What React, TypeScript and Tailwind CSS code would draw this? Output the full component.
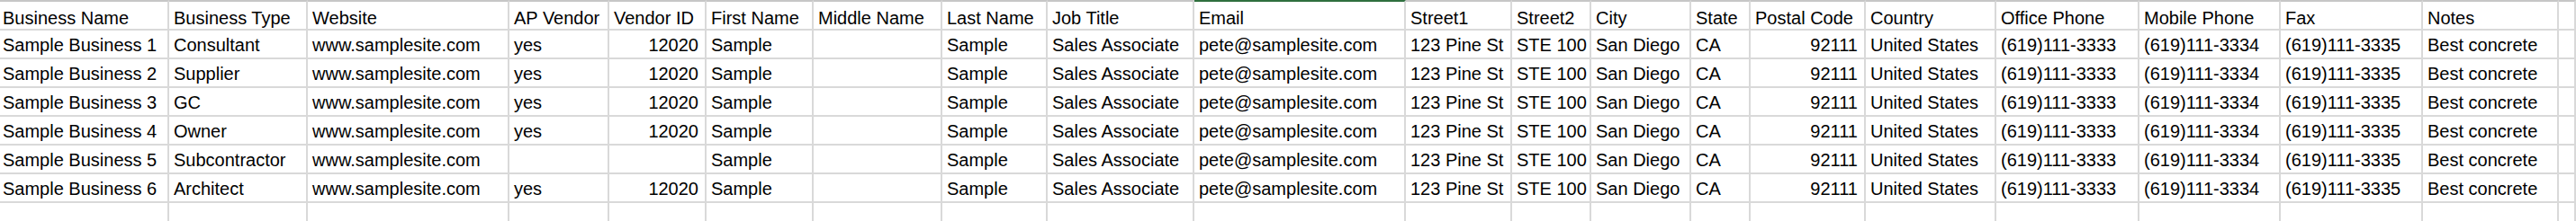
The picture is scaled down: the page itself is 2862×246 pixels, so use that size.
import React from 'react';

type Col = { title: string; key: string; right?: boolean };

const columns: Col[] = [
  { title: 'Business Name', key: 'name' },
  { title: 'Business Type', key: 'type' },
  { title: 'Website', key: 'web' },
  { title: 'AP Vendor', key: 'ap' },
  { title: 'Vendor ID', key: 'vid', right: true },
  { title: 'First Name', key: 'first' },
  { title: 'Middle Name', key: 'middle' },
  { title: 'Last Name', key: 'last' },
  { title: 'Job Title', key: 'job' },
  { title: 'Email', key: 'email' },
  { title: 'Street1', key: 'st1' },
  { title: 'Street2', key: 'st2' },
  { title: 'City', key: 'city' },
  { title: 'State', key: 'state' },
  { title: 'Postal Code', key: 'zip', right: true },
  { title: 'Country', key: 'country' },
  { title: 'Office Phone', key: 'office' },
  { title: 'Mobile Phone', key: 'mobile' },
  { title: 'Fax', key: 'fax' },
  { title: 'Notes', key: 'notes' },
  { title: '', key: 'extra' },
];

const types = ['Consultant', 'Supplier', 'GC', 'Owner', 'Subcontractor', 'Architect'];

const rows: Record<string, string>[] = types.map((type, i) => ({
  name: `Sample Business ${i + 1}`,
  type,
  web: 'www.samplesite.com',
  ap: i === 4 ? '' : 'yes',
  vid: i === 4 ? '' : '12020',
  first: 'Sample',
  middle: '',
  last: 'Sample',
  job: 'Sales Associate',
  email: 'pete@samplesite.com',
  st1: '123 Pine St',
  st2: 'STE 100',
  city: 'San Diego',
  state: 'CA',
  zip: '92111',
  country: 'United States',
  office: '(619)111-3333',
  mobile: '(619)111-3334',
  fax: '(619)111-3335',
  notes: 'Best concrete',
  extra: '',
}));

function Cell({ text, right, header, email, first }: { text: string; right?: boolean; header?: boolean; email?: boolean; first?: boolean }) {
  return (
    <div
      className={`h-[32px] border-r-2 border-b-2 border-[#d9d9d9] overflow-hidden whitespace-nowrap pt-[3px] leading-[27px] ${
        right ? 'text-right pr-[7px]' : first ? 'pl-[3px]' : 'pl-[5px]'
      } ${header ? (email ? 'border-t-2 border-t-[#2f6f3e] h-[34px] pt-[5px]' : 'border-t-2 border-t-[#c6c6c6] h-[34px] pt-[5px]') : ''}`}
    >
      {text}
    </div>
  );
}

export default function App() {
  return (
    <div className="w-[2862px] h-[246px] overflow-hidden bg-white text-black font-['Liberation_Sans',Arial,sans-serif] text-[20px]">
      <div className="grid grid-cols-[188px_154px_224px_111px_108px_119px_143px_117px_163px_235px_118px_88px_111px_66px_128px_145px_159px_157px_158px_151px_19px]">
        {columns.map((c, i) => (
          <Cell key={c.key} text={c.title} header email={c.key === 'email'} first={i === 0} />
        ))}
        {rows.map((r, ri) =>
          columns.map((c, i) => <Cell key={`${ri}-${c.key}`} text={r[c.key]} right={c.right} first={i === 0} />)
        )}
        {columns.map((c) => (
          <Cell key={`empty-${c.key}`} text="" />
        ))}
      </div>
    </div>
  );
}
